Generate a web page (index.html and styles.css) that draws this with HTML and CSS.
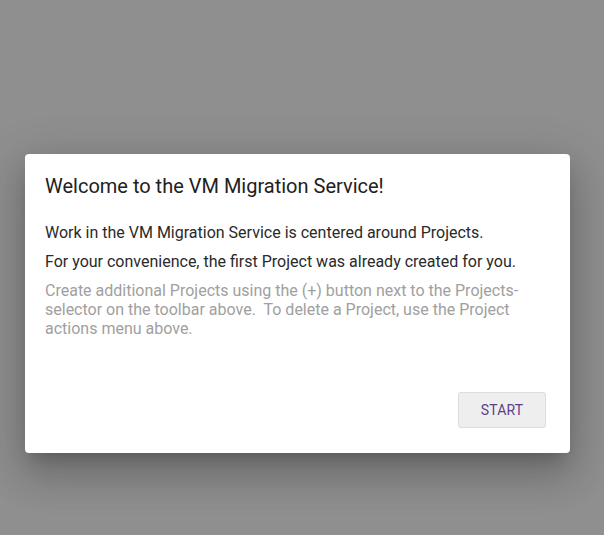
FILE: index.html
```html
<!DOCTYPE html>
<html>
<head>
<meta charset="utf-8">
<link rel="stylesheet" href="styles.css">
</head>
<body>
<div class="backdrop">
  <div class="dialog">
    <h1 class="title">Welcome to the VM Migration Service!</h1>
    <p class="text">Work in the VM Migration Service is centered around Projects.</p>
    <p class="text">For your convenience, the first Project was already created for you.</p>
    <p class="hint">Create additional Projects using the (+) button next to the Projects-selector on the toolbar above.&nbsp; To delete a Project, use the Project actions menu above.</p>
    <div class="actions">
      <button class="btn">START</button>
    </div>
  </div>
</div>
</body>
</html>
```
FILE: styles.css
```css
html, body {
  margin: 0;
  padding: 0;
  height: 100%;
}
body {
  background: #8f8f8f;
  font-family: Roboto, "Noto Sans", sans-serif;
}
.backdrop {
  height: 100%;
  display: flex;
  flex-direction: column;
  padding: 154px 34px 0 25px;
  box-sizing: border-box;
}
.dialog {
  background: #fff;
  border-radius: 4px;
  box-shadow: 0 11px 15px -7px rgba(0,0,0,.2), 0 24px 38px 3px rgba(0,0,0,.14), 0 9px 46px 8px rgba(0,0,0,.12);
  padding: 20px 24px 25px 20px;
  height: 299px;
  box-sizing: border-box;
  display: flex;
  flex-direction: column;
}
.title {
  margin: 0 0 25px 0;
  font-size: 20px;
  font-weight: 400;
  line-height: 24px;
  color: #212121;
}
.text {
  margin: 0 0 10px 0;
  font-size: 16px;
  line-height: 19px;
  color: #2a2a2a;
}
.hint {
  margin: 0;
  font-size: 16px;
  line-height: 19px;
  color: #a0a0a0;
}
.actions {
  margin-top: auto;
  display: flex;
  justify-content: flex-end;
}
.btn {
  width: 88px;
  height: 36px;
  background: #eeeeee;
  border: 1px solid #dcdcdc;
  border-radius: 3px;
  color: #5f3f88;
  font-family: Roboto, sans-serif;
  font-size: 14px;
  letter-spacing: 0.2px;
}
```
